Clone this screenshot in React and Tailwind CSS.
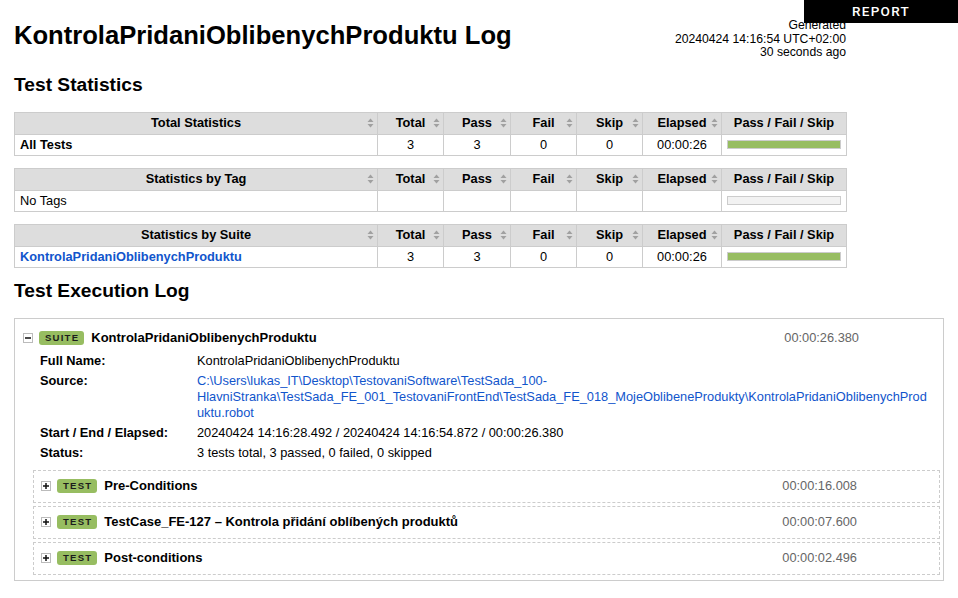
import React from 'react';

const STAT_COLS = ['Total', 'Pass', 'Fail', 'Skip', 'Elapsed'];

const TABLES = [
  {
    title: 'Total Statistics',
    rows: [{ name: 'All Tests', bold: true, values: ['3', '3', '0', '0', '00:00:26'], bar: 'pass' }],
  },
  {
    title: 'Statistics by Tag',
    rows: [{ name: 'No Tags', values: ['', '', '', '', ''], bar: 'empty' }],
  },
  {
    title: 'Statistics by Suite',
    rows: [{ name: 'KontrolaPridaniOblibenychProduktu', link: true, bold: true, values: ['3', '3', '0', '0', '00:00:26'], bar: 'pass' }],
  },
];

const TESTS = [
  { name: 'Pre-Conditions', elapsed: '00:00:16.008' },
  { name: 'TestCase_FE-127 – Kontrola přidání oblíbených produktů', elapsed: '00:00:07.600' },
  { name: 'Post-conditions', elapsed: '00:00:02.496' },
];

function SortArrows() {
  return (
    <svg width="7" height="10" viewBox="0 0 7 10" className="absolute right-[3px] top-1/2 -translate-y-1/2">
      <path d="M3.5 0.5 L6.5 4 L0.5 4 Z" fill="#a0a0a0" />
      <path d="M0.5 6 L6.5 6 L3.5 9.5 Z" fill="#a0a0a0" />
    </svg>
  );
}

function StatTable({ title, rows }) {
  return (
    <table className="w-[832px] table-fixed border-collapse mb-[12px]">
      <colgroup>
        <col className="w-[363px]" />
        <col className="w-[66px]" />
        <col className="w-[67px]" />
        <col className="w-[66px]" />
        <col className="w-[66px]" />
        <col className="w-[79px]" />
        <col className="w-[125px]" />
      </colgroup>
      <thead>
        <tr className="bg-[#dddddd]">
          <th className="relative h-[22px] border border-[#cccccc] font-bold text-center">
            {title}
            <SortArrows />
          </th>
          {STAT_COLS.map((c) => (
            <th key={c} className="relative h-[22px] border border-[#cccccc] font-bold text-center">
              {c}
              <SortArrows />
            </th>
          ))}
          <th className="h-[22px] border border-[#cccccc] font-bold text-center">Pass / Fail / Skip</th>
        </tr>
      </thead>
      <tbody>
        {rows.map((r) => (
          <tr key={r.name} className="bg-white">
            <td className={`h-[21px] border border-[#cccccc] pl-[5px] ${r.bold ? 'font-bold' : ''}`}>
              {r.link ? <span className="text-[#1155cc]">{r.name}</span> : r.name}
            </td>
            {r.values.map((v, i) => (
              <td key={i} className="h-[21px] border border-[#cccccc] text-center">{v}</td>
            ))}
            <td className="h-[21px] border border-[#cccccc] px-[5px]">
              <div className={`h-[9px] border border-[#cccccc] ${r.bar === 'pass' ? 'bg-[#97bd61]' : 'bg-[#f2f2f2]'}`} />
            </td>
          </tr>
        ))}
      </tbody>
    </table>
  );
}

function Toggle({ open }) {
  return (
    <span className="w-[10px] h-[10px] shrink-0 border border-[#bbbbbb] bg-white flex items-center justify-center">
      <svg width="6" height="6" viewBox="0 0 6 6">
        <rect x="0" y="2.25" width="6" height="1.5" fill="#111" />
        {!open && <rect x="2.25" y="0" width="1.5" height="6" fill="#111" />}
      </svg>
    </span>
  );
}

function Label({ text }) {
  return (
    <span className="inline-flex items-center justify-center h-[14px] pl-[6px] pr-[5px] rounded-[3px] bg-[#97bd61] text-[9.6px] font-bold tracking-[1.2px] text-[#1c1c1c] leading-none">
      {text}
    </span>
  );
}

export default function App() {
  return (
    <div className="relative min-h-screen bg-white text-black font-['Liberation_Sans',Arial,sans-serif] text-[12.8px] px-[14px]">
      {/* report link tab */}
      <div className="absolute top-0 right-0 w-[154px] h-[23px] bg-black flex items-center justify-center">
        <span className="font-['Roboto',sans-serif] font-medium text-white text-[13.5px] tracking-[1.3px] leading-none">REPORT</span>
      </div>

      {/* Header */}
      <div className="w-[832px] flex justify-between items-start">
        <h1 className="mt-[21px] text-[25.6px] leading-[29px] font-bold">KontrolaPridaniOblibenychProduktu Log</h1>
        <div className="mt-[19px] text-right text-[12.2px] leading-[13.5px]">
          <div>Generated</div>
          <div>20240424 14:16:54 UTC+02:00</div>
          <div>30 seconds ago</div>
        </div>
      </div>

      <h2 className="mt-[14px] text-[19.2px] leading-[22px] font-bold">Test Statistics</h2>
      <div className="mt-[16px]">
        {TABLES.map((t) => (
          <StatTable key={t.title} title={t.title} rows={t.rows} />
        ))}
      </div>

      <h2 className="mt-[4px] text-[19.2px] leading-[22px] font-bold">Test Execution Log</h2>

      {/* Suite */}
      <div className="mt-[16px] w-[930px] border border-[#cccccc] pb-[5px]">
        <div className="flex items-center h-[20px] mt-[9px] pl-[8px] pr-[84px]">
          <Toggle open />
          <span className="ml-[6px] flex"><Label text="SUITE" /></span>
          <span className="ml-[7px] font-bold text-[13px]">KontrolaPridaniOblibenychProduktu</span>
          <span className="ml-auto text-[#666666] text-[12.8px]">00:00:26.380</span>
        </div>

        <table className="mt-[3px] ml-[25px] text-[12.8px] leading-[16px] border-collapse">
          <tbody>
            <tr>
              <td className="w-[157px] py-[2px] align-top font-bold">Full Name:</td>
              <td className="py-[2px]">KontrolaPridaniOblibenychProduktu</td>
            </tr>
            <tr>
              <td className="py-[2px] align-top font-bold">Source:</td>
              <td className="py-[2px] text-[#1155cc] whitespace-nowrap">
                C:\Users\lukas_IT\Desktop\TestovaniSoftware\TestSada_100-
                <br />
                HlavniStranka\TestSada_FE_001_TestovaniFrontEnd\TestSada_FE_018_MojeOblibeneProdukty\KontrolaPridaniOblibenychProd
                <br />
                uktu.robot
              </td>
            </tr>
            <tr>
              <td className="py-[2px] align-top font-bold">Start / End / Elapsed:</td>
              <td className="py-[2px]">20240424 14:16:28.492 / 20240424 14:16:54.872 / 00:00:26.380</td>
            </tr>
            <tr>
              <td className="py-[2px] align-top font-bold">Status:</td>
              <td className="py-[2px]">3 tests total, 3 passed, 0 failed, 0 skipped</td>
            </tr>
          </tbody>
        </table>

        <div className="mt-[7px] ml-[18px] mr-[3px] flex flex-col gap-[3px]">
          {TESTS.map((t) => (
            <div key={t.name} className="h-[33px] border border-dashed border-[#cccccc] flex items-center pl-[7px] pr-[82px]">
              <Toggle />
              <span className="ml-[6px] flex"><Label text="TEST" /></span>
              <span className="ml-[7px] font-bold text-[13px]">{t.name}</span>
              <span className="ml-auto text-[#666666] text-[12.8px]">{t.elapsed}</span>
            </div>
          ))}
        </div>
      </div>
    </div>
  );
}
